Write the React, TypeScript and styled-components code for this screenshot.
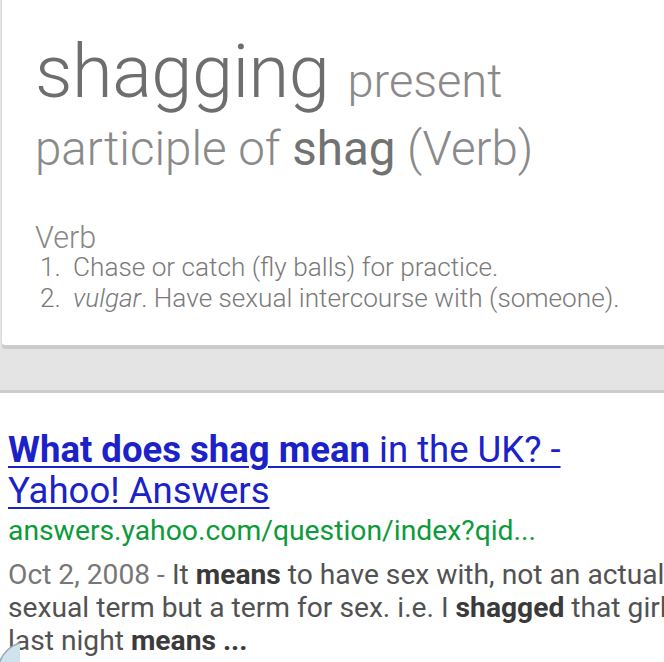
import React from "react"
import styled, { createGlobalStyle } from "styled-components"

const GlobalStyle = createGlobalStyle`
  html, body {
    margin: 0;
    padding: 0;
    background: #fff;
    overflow: hidden;
  }
  body {
    font-family: Roboto, "Liberation Sans", sans-serif;
  }
`

const definitions = [
  { label: null, text: "Chase or catch (fly balls) for practice." },
  { label: "vulgar", text: "Have sexual intercourse with (someone)." },
]

export default function App() {
  return (
    <>
      <GlobalStyle />
      <StyledPage>
        <StyledTop>
          <StyledCard>
            <StyledHeadRow>
              <StyledWord>shagging</StyledWord> <StyledLight>present</StyledLight>
            </StyledHeadRow>
            <StyledSubRow>
              participle of <StyledStrong>shag</StyledStrong> (Verb)
            </StyledSubRow>
            <StyledPos>Verb</StyledPos>
            <StyledList>
              {definitions.map((d, i) => (
                <StyledItem key={i}>
                  <StyledNum>{i + 1}.</StyledNum>
                  <span>
                    {d.label && <StyledLabel>{d.label}</StyledLabel>}
                    {d.label && ". "}
                    {d.text}
                  </span>
                </StyledItem>
              ))}
            </StyledList>
          </StyledCard>
          <StyledBand />
        </StyledTop>
        <StyledResult>
          <StyledTitle href="#">
            <b>What does shag mean</b> in the UK? -<br />
            Yahoo! Answers
          </StyledTitle>
          <StyledUrl>answers.yahoo.com/question/index?qid...</StyledUrl>
          <StyledSnippet>
            <StyledDate>Oct 2, 2008 - </StyledDate>It <b>means</b> to have sex with, not an actual
            <br />
            sexual term but a term for sex. i.e. I <b>shagged</b> that girl
            <br />
            last night <b>means ...</b>
          </StyledSnippet>
        </StyledResult>
        <StyledBubble width="20" height="20" viewBox="0 0 20 20">
          <circle cx="28" cy="30" r="30" fill="#cfe2ee" stroke="#9aa7b0" strokeWidth="1.5" />
        </StyledBubble>
      </StyledPage>
    </>
  )
}

const StyledPage = styled.div`
  position: relative;
  width: 664px;
  height: 662px;
  overflow: hidden;
  background: #fff;
`

const StyledTop = styled.div`
  background: #e4e4e4;
  border-bottom: 3px solid #cccccc;
`

const StyledCard = styled.div`
  margin-left: 2px;
  padding: 35px 0 31px 33px;
  background: #fff;
  border-bottom-left-radius: 3px;
  box-shadow: 0 4px 0 #cbcbcb, -1px 0 0 #dadada;
  font-weight: 300;
  color: #888;
`

const StyledHeadRow = styled.div`
  font-size: 74px;
  line-height: 1;
  color: #6e6e6e;
  white-space: nowrap;
`

const StyledWord = styled.span`
  letter-spacing: -0.5px;
`

const StyledLight = styled.span`
  font-size: 47px;
  color: #8a8a8a;
`

const StyledSubRow = styled.div`
  margin-top: 14px;
  font-size: 47.5px;
  line-height: 52px;
  color: #8a8a8a;
  white-space: nowrap;
`

const StyledStrong = styled.span`
  font-weight: 400;
  color: #727272;
`

const StyledPos = styled.div`
  margin-top: 48px;
  font-size: 30.5px;
  line-height: 29px;
  color: #888;
`

const StyledList = styled.ol`
  list-style: none;
  margin: 0;
  padding: 0 0 0 5px;
`

const StyledItem = styled.li`
  display: flex;
  font-size: 26.2px;
  line-height: 31px;
  color: #7a7a7a;
  white-space: nowrap;
`

const StyledNum = styled.span`
  width: 33px;
  flex: none;
`

const StyledLabel = styled.i`
  font-style: italic;
`

const StyledBand = styled.div`
  height: 41px;
  margin-top: 4px;
`

const StyledResult = styled.div`
  padding: 36px 0 0 8px;
`

const StyledTitle = styled.a`
  display: block;
  font-size: 36.5px;
  line-height: 41px;
  color: #1a22c8;
  text-decoration: underline;
  text-decoration-thickness: 2px;
  text-underline-offset: 4px;
  white-space: nowrap;
  b {
    font-weight: 700;
  }
`

const StyledUrl = styled.div`
  margin-top: 1px;
  font-size: 28.3px;
  line-height: 38px;
  color: #0c9a3a;
  white-space: nowrap;
`

const StyledSnippet = styled.div`
  margin-top: 8px;
  font-size: 28.2px;
  line-height: 33px;
  color: #525252;
  white-space: nowrap;
  b {
    font-weight: 700;
    color: #3a3a3a;
  }
`

const StyledDate = styled.span`
  color: #777;
`

const StyledBubble = styled.svg`
  position: absolute;
  left: 0;
  bottom: 0;
`
